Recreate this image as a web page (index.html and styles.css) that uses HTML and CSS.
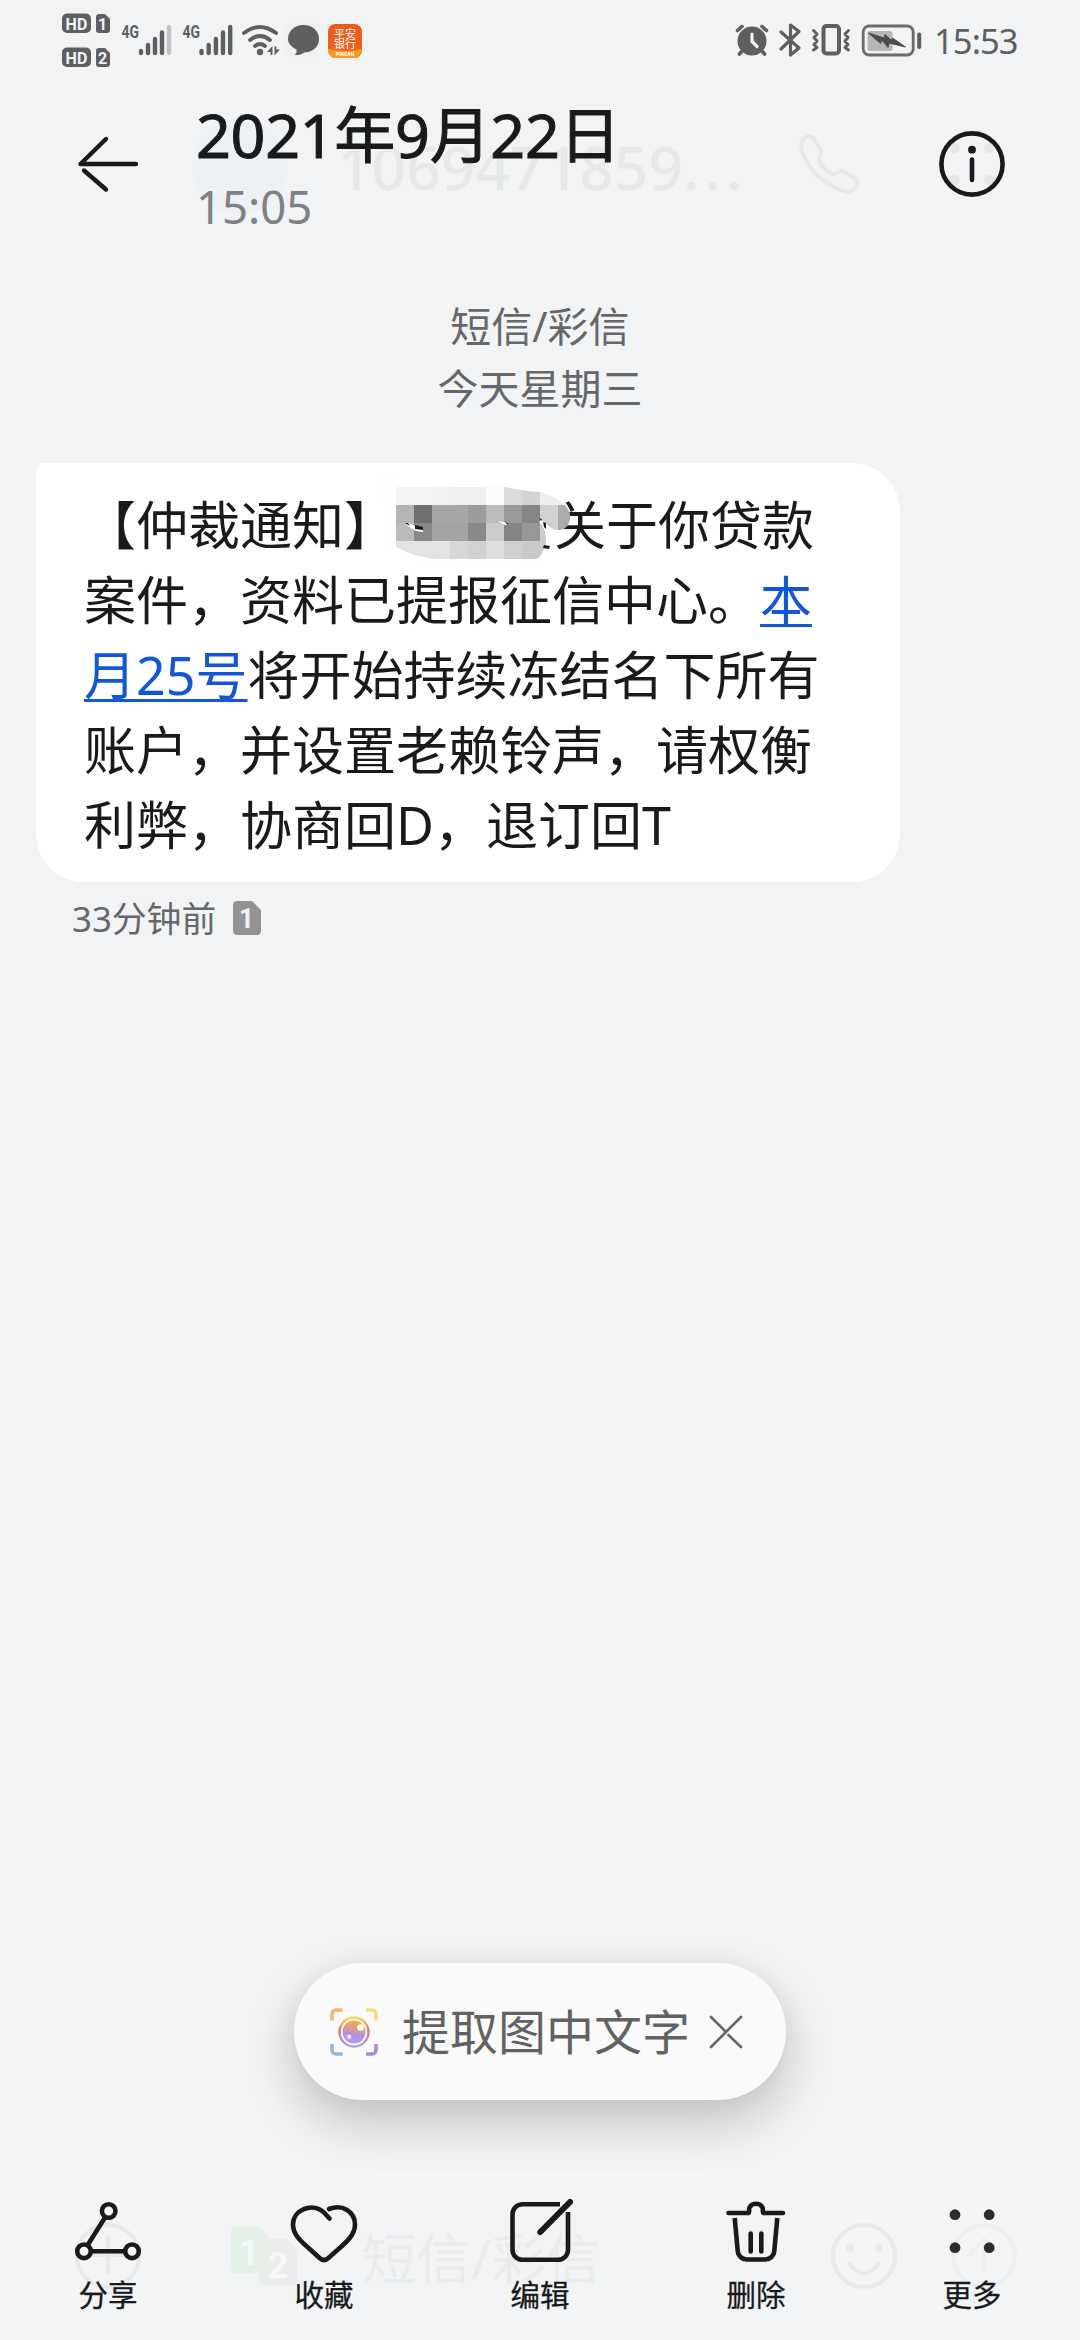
FILE: index.html
```html
<!DOCTYPE html>
<html lang="zh-CN">
<head>
<meta charset="utf-8">
<title>2021年9月22日</title>
<link rel="stylesheet" href="styles.css">
</head>
<body>
<div class="screen">
  <div class="status">
    <svg class="ic" width="48" height="56" viewBox="62 12 48 56">
      <g fill="#5e5f61"><rect x="62" y="13.500" width="29" height="19.500" rx="5"/><path d="M99 14h6l5 5v11a3 3 0 0 1-3 3h-8a3 3 0 0 1-3-3V17a3 3 0 0 1 3-3z"/><rect x="62" y="47.500" width="29" height="19.500" rx="5"/><path d="M99 48h6l5 5v11a3 3 0 0 1-3 3h-8a3 3 0 0 1-3-3V51a3 3 0 0 1 3-3z"/></g>
      <g class="tiny"><text x="76.500" y="29.500" textLength="22">HD</text><text x="76.500" y="63.500" textLength="22">HD</text><text x="102.500" y="29.500">1</text><text x="102.500" y="63.500">2</text></g>
    </svg>
    <svg class="ic sig1" width="51" height="32" viewBox="121 24 51 32">
      <text class="net" x="121.500" y="38" textLength="17.500" lengthAdjust="spacingAndGlyphs">4G</text>
      <path class="bars" d="M141 51v2M148 45v8M155 39v14M162 32.500v20.500"/><path class="bars dim" d="M169 27v26"/>
    </svg>
    <svg class="ic sig2" width="51" height="32" viewBox="182 24 51 32">
      <text class="net" x="182.500" y="38" textLength="17.500" lengthAdjust="spacingAndGlyphs">4G</text>
      <path class="bars" d="M201.500 51v2M208.700 45v8M215.900 39v14M223 32.500v20.500M230.200 27v26"/>
    </svg>
    <svg class="ic wifi" width="40" height="34" viewBox="241 23 40 34">
      <path d="M244 33q16-12 32 0M250 40q10-8 20 0M255 46q5-4 10 0" fill="none" stroke="#5e5f61" stroke-width="3.800" stroke-linecap="round"/>
      <circle cx="260" cy="52" r="3.200" fill="#5e5f61"/><path d="M267 52l5.500-6v9h-2v-3zM280 49.500l-5.500 6v-9h2v3z" fill="#5e5f61"/>
    </svg>
    <svg class="ic chat" width="36" height="36" viewBox="285 23 36 36">
      <rect x="285" y="24" width="34" height="34" rx="8" fill="#f4efef"/>
      <path d="M303.500 26c9 0 15.500 6 15.500 14s-6.500 13.500-15 13.500c-2 2-6 3-9.500 2 2-1 2.500-3 2-5-5-2.500-8.500-6-8.500-10.500 0-8 6.500-14 15.500-14z" fill="#5e5f61"/>
    </svg>
    <svg class="ic bank" width="34" height="34" viewBox="0 0 34 34">
      <defs><linearGradient id="or" x1="0" y1="0" x2="0" y2="1"><stop offset="0" stop-color="#ec5a1c"/><stop offset="1" stop-color="#f4621f"/></linearGradient></defs>
      <rect width="34" height="34" rx="7.500" fill="url(#or)"/><path d="M0 25q17 4 34 0v1.500a7.500 7.500 0 0 1-7.500 7.500h-19A7.500 7.500 0 0 1 0 26.500z" fill="#fb9a20"/>
      <text class="bk" x="17" y="14">平安</text><text class="bk" x="17" y="24">银行</text><text class="pa" x="17" y="31.800">PINGAN</text>
    </svg>
    <div class="right">
      <svg width="34" height="33" viewBox="735 24 34 33">
        <circle cx="752" cy="41" r="14.500" fill="#5e5f61"/><path d="M737.500 30.500l4.500-4M766.500 30.500l-4.500-4M742 51l-2.500 3M762 51l2.500 3" stroke="#5e5f61" stroke-width="3.600" stroke-linecap="round"/><path d="M752 34v7.500l5 5" fill="none" stroke="#f1f2f4" stroke-width="3.200" stroke-linecap="round"/>
      </svg>
      <svg class="bt" width="22" height="36" viewBox="779 22 22 36"><path d="M781 32l18 16-8.500 7V25l8.500 6.500L781 49" fill="none" stroke="#5e5f61" stroke-width="3.200" stroke-linecap="round" stroke-linejoin="round"/></svg>
      <svg class="vib" width="40" height="32" viewBox="811 24 40 32"><rect x="823.500" y="26" width="15.500" height="27.500" rx="3" fill="none" stroke="#5e5f61" stroke-width="4"/><path d="M813.500 30.500l3.500 3.500-3 3.500 3 3.500-3 3.500 3 3-3.500 2.500M848.500 30.500L845 34l3 3.500-3 3.500 3 3.500-3 3 3.500 2.500" fill="none" stroke="#5e5f61" stroke-width="3" stroke-linejoin="round" stroke-linecap="round"/></svg>
      <svg class="bat" width="60" height="33" viewBox="862 24 60 33"><rect x="863.200" y="26" width="50" height="29" rx="6" fill="none" stroke="#6a6b6d" stroke-width="2.800"/><rect x="867.500" y="31" width="25" height="20" rx="2.500" fill="#b5b6b8"/><path d="M868.500 33l15.500 5 1-3.500 6.500 6 1-2.500 13 9-16.500-4-1 4.500-6-7.500-1.500 3.500z" fill="#4c4d4f" stroke="#4c4d4f" stroke-width="1"/><path d="M919.200 34.500v12.500" stroke="#5e5f61" stroke-width="4" stroke-linecap="round"/></svg>
      <span class="clock">15:53</span>
    </div>
  </div>

  <header class="top">
    <div class="ghost" aria-hidden="true">
      <i class="avatar"></i><span class="num">1069471859<b>...</b></span>
      <svg class="phone" width="64" height="64" viewBox="797 132 64 64"><path d="M802.500 140.500c4-5.500 9-5.500 12-.5l6.500 10c2 3.500-3 6-2 10 2 6 8 12.500 13.500 14 4 1 6.500-4.500 10.500-3l11 6.500c5 3 4 7 .5 11-3.500 4-8 4-13 2-19-8-32-20-38.500-36.500-2-5-3-9-.5-13.500z" fill="none" stroke="#e7e8ea" stroke-width="4"/></svg>
    </div>
    <svg class="back" width="62" height="58" viewBox="77 135 62 58"><path d="M136 164H80.500L106 139M84 170.500L106 189.500" fill="none" stroke="#191a1b" stroke-width="4.400" stroke-linecap="round" stroke-linejoin="round"/></svg>
    <div class="titles"><h1>2021年9月22日</h1><p>15:05</p></div>
    <svg class="info" width="66" height="66" viewBox="939 131 66 66"><g fill="#e5e6e8"><circle cx="954.500" cy="148" r="5.300"/><circle cx="989" cy="148" r="5.300"/><circle cx="954.500" cy="180" r="5.300"/><circle cx="989" cy="180" r="5.300"/></g><circle cx="972" cy="164" r="30.600" fill="none" stroke="#191a1b" stroke-width="4.600"/><circle cx="972" cy="149.700" r="3.900" fill="#191a1b"/><path d="M972 159.500v20.500" stroke="#191a1b" stroke-width="4.600" stroke-linecap="round"/></svg>
  </header>

  <main>
    <div class="day">短信/彩信<br>今天星期三</div>
    <div class="bubble">【仲裁通知】<span class="mask"><svg width="200" height="90" viewBox="0 0 200 90">
      <defs><clipPath id="blob"><path d="M0 0h18l90 0 27 4.500 9 0.500c14 4 28 12 30 22 1 12-6 17-14 16-8-2-9-10-17-9 8 10 9 22 4 30-2 4-3 7-7 8H38L18 68 0 60z"/></clipPath></defs>
      <path d="M-16-15c14-2 16 12 30 14l100-3 30 80-40 3-80-5-30-14z" fill="#fefefe"/>
      <g clip-path="url(#blob)" shape-rendering="crispEdges">
        <path fill="#f4f4f4" d="M0 0h36v18H0z"/><path fill="#f1f1f1" d="M36 0h18v18H36z"/><path fill="#efefef" d="M54 0h36v18H54z"/><path fill="#fcfcfc" d="M90 0h18v18H90z"/><path fill="#dcdcdc" d="M108 0h18v18h-18z"/><path fill="#d4d4d4" d="M126 0h18v18h-18z"/><path fill="#eee" d="M144 0h34v18h-34z"/>
        <path fill="#b5b5b5" d="M0 18h18v18H0z"/><path fill="#707070" d="M18 18h18v18H18z"/><path fill="#a6a6a6" d="M36 18h36v18H36z"/><path fill="#9c9c9c" d="M72 18h18v18H72z"/><path fill="#bcbcbc" d="M90 18h18v18H90z"/><path fill="#999" d="M108 18h18v18h-18z"/><path fill="#868686" d="M126 18h18v18h-18z"/><path fill="#d2d2d2" d="M144 18h18v27h-18z"/><path fill="#acacac" d="M162 18h18v27h-18z"/>
        <path fill="#bababa" d="M0 36h18v18H0z"/><path fill="#888" d="M18 36h18v18H18z"/><path fill="#a4a4a4" d="M36 36h36v18H36z"/><path fill="#8a8a8a" d="M72 36h18v18H72z"/><path fill="#ccc" d="M90 36h18v18H90z"/><path fill="#848484" d="M108 36h18v18h-18z"/><path fill="#979797" d="M126 36h18v18h-18z"/><path fill="#ccc" d="M144 36h12v36h-12z"/>
        <path fill="#e3e3e3" d="M0 54h54v18H0z"/><path fill="#d7d7d7" d="M54 54h18v18H54z"/><path fill="#d1d1d1" d="M72 54h18v18H72z"/><path fill="#dedede" d="M90 54h18v18H90z"/><path fill="#d0d0d0" d="M108 54h18v18h-18z"/><path fill="#c9c9c9" d="M126 54h18v18h-18z"/>
      </g>
      <path d="M9 36l4 0 6 3 8 2v4l-7-1-7-4z" fill="#fff"/><path d="M9 36h3l2 3zM19 38l8 2v3l-8-1z" fill="#191a1b"/><path d="M102 34l10 2 3 2-6 0z" fill="#fff"/><path d="M109 35l6 2.500h-4zM147 35l3 1v6l-2-2zM148 58l6 1-1 3-6-1z" fill="#191a1b"/><path d="M143 31l3 1-1 2z" fill="#222"/>
    </svg></span>关于你贷款<br>案件，资料已提报征信中心。<a>本</a><br><a>月25号</a>将开始持续冻结名下所有<br>账户，并设置老赖铃声，请权衡<br>利弊，协商回D，退订回T</div>
    <div class="meta">33分钟前<svg width="28" height="34" viewBox="0 0 28 34"><path d="M4 0h15l9 9v21a4 4 0 0 1-4 4H4a4 4 0 0 1-4-4V4a4 4 0 0 1 4-4z" fill="#929395"/><text x="13.500" y="26.500">1</text></svg></div>
  </main>

  <div class="pill">
    <svg width="48" height="48" viewBox="0 0 48 48">
      <defs><linearGradient id="q" x1="0" y1="0" x2="0" y2="1"><stop offset="0" stop-color="#f4dc5c"/><stop offset=".45" stop-color="#e0706a"/><stop offset="1" stop-color="#9aa6f0"/></linearGradient><linearGradient id="w" x1=".6" y1="0" x2=".4" y2="1"><stop offset="0" stop-color="#efb04e"/><stop offset=".35" stop-color="#e59a80"/><stop offset=".6" stop-color="#b48fe0"/><stop offset="1" stop-color="#b59af8"/></linearGradient></defs>
      <g fill="none" stroke-width="3.600"><path d="M2 12.500V6a4 4 0 0 1 4-4h6.500" stroke="#efb872"/><path d="M36 2h6a4 4 0 0 1 4 4v6.500" stroke="#f1df80"/><path d="M2 36v6a4 4 0 0 0 4 4h6.500" stroke="#8dbbe6"/><path d="M36 46h6a4 4 0 0 0 4-4v-6" stroke="#a48ade"/></g>
      <circle cx="24" cy="24" r="14.500" fill="none" stroke="url(#q)" stroke-width="2.400"/><circle cx="24" cy="24" r="11.500" fill="url(#w)"/><circle cx="30.500" cy="19.500" r="3.300" fill="#fff"/><circle cx="19.200" cy="28.800" r="2" fill="#fff"/>
    </svg>
    <span>提取图中文字</span>
    <svg class="x" width="34" height="34" viewBox="0 0 34 34"><path d="M2 2l15 15L32 2M2 32l15-15M19.500 20L32 32" fill="none" stroke="#666" stroke-width="2.600" stroke-linecap="round"/></svg>
  </div>

  <footer class="bar">
    <svg class="under" aria-hidden="true" width="1080" height="170" viewBox="0 2170 1080 170">
      <path d="M0 2205q8-33 50-33h980q42 0 50 33v135H0z" fill="#f3f4f6"/><rect x="180" y="2203" width="623" height="107" rx="53" fill="#f2f3f5"/>
      <g fill="none" stroke="#e8e9eb" stroke-width="4.200"><circle cx="108" cy="2256" r="31"/><path d="M108 2237v36M92 2255h32" stroke-linecap="round"/><circle cx="864" cy="2256" r="31"/><path d="M849 2264q15 18 30 0" stroke-linecap="round"/></g>
      <g fill="none" stroke="#edeef0" stroke-width="4"><circle cx="984" cy="2256" r="31"/><path d="M984 2272v-33M968 2256l16-16 16 16" stroke-linecap="round"/></g>
      <g fill="#e8e9eb"><circle cx="850" cy="2248" r="3.800"/><circle cx="878.500" cy="2248" r="3.800"/><path d="M262 2239h25l10 10v32a4 4 0 0 1-4 4h-30a4 4 0 0 1-4-4v-38z" fill="#ebecee"/><path d="M314 2251h16l-8 13z" fill="#eceef0"/></g>
      <path d="M235 2226h23l11 11v36h-34a4 4 0 0 1-4-4v-39a4 4 0 0 1 4-4z" fill="#e5f0e9"/>
      <g class="simno"><text x="249" y="2265">1</text><text x="278" y="2278">2</text></g>
      <text class="hint" x="362" y="2279">短信/彩信</text>
    </svg>
    <div class="act"><svg width="68" height="64" viewBox="74 2199 68 64"><g class="ln"><path d="M105 2217.500L88 2244.500M91.500 2251.300h33"/><circle cx="108.700" cy="2211" r="6.800"/><circle cx="84" cy="2251.300" r="6.800"/><circle cx="132" cy="2251.300" r="6.800"/></g></svg>分享</div>
    <div class="act"><svg width="68" height="64" viewBox="290 2199 68 64"><path class="ln" d="M329.500 2218.500l-6-6.500c-12-10-30.500-2-30.500 12.500 0 12 10 18 26.500 33.500q4.500 4 9 0c16.500-15 26.500-21.500 26.500-33.500 0-12.500-12.500-21-26-15.500"/></svg>收藏</div>
    <div class="act"><svg width="68" height="64" viewBox="506 2199 68 64"><path class="ln edge" d="M560 2204.200h-37.500a10 10 0 0 0-10 10v35.500a10 10 0 0 0 10 10h35.500a10 10 0 0 0 10-10V2212"/><path class="ln pen" d="M540.300 2232L570 2202"/></svg>编辑</div>
    <div class="act"><svg width="68" height="64" viewBox="722 2199 68 64"><path class="ln" d="M728.500 2213h20c1.500-.5 0-3 1-5.500 2.500-5 10.500-5 13 0 1 2.500-.5 5 1 5.500h19.500M750.700 2233.500v18M761.300 2233.500v18"/><path class="ln edge" d="M734.700 2218l3 33a9 9 0 0 0 9 8.500h18.600a9 9 0 0 0 9-8.500l3-33"/></svg>删除</div>
    <div class="act"><svg width="68" height="64" viewBox="938 2199 68 64"><g fill="#2b2c2d"><circle cx="955" cy="2214.700" r="5.400"/><circle cx="989.200" cy="2214.700" r="5.400"/><circle cx="955" cy="2247.700" r="5.400"/><circle cx="989.200" cy="2247.700" r="5.400"/></g></svg>更多</div>
  </footer>
</div>
</body>
</html>
```
FILE: styles.css
```css
* { box-sizing: border-box; margin: 0; padding: 0; }
body {
  width: 1080px;
  background: #f1f3f5;
  color: #191a1b;
  font-family: "Noto Sans", "Noto Sans CJK SC", sans-serif;
  text-spacing-trim: space-all;
}
svg { display: block; flex: none; overflow: visible; }
.screen { width: 1080px; height: 2340px; display: flex; flex-direction: column; overflow: hidden; }

.status { display: flex; align-items: center; height: 80px; padding: 0 62px; }
.sig1 { margin-left: 11px; }
.sig2 { margin-left: 10px; }
.wifi { margin-left: 8px; }
.chat { margin-left: 4px; }
.bank { margin-left: 7px; margin-top: 2px; }
.right { display: flex; align-items: center; margin-left: 373px; }
.bt { margin-left: 10px; }
.vib { margin-left: 10px; }
.bat { margin-left: 11px; }
.clock { margin-left: 12px; font-size: 34.5px; letter-spacing: -.9px; line-height: 80px; color: #5e5f61; margin-top: 2px; white-space: nowrap; }
.tiny { font: 700 16px Roboto, sans-serif; fill: #f1f3f5; text-anchor: middle; }
.net { font: 700 18px Roboto, sans-serif; fill: #5e5f61; }
.bars { fill: none; stroke: #5e5f61; stroke-width: 4.4; stroke-linecap: round; }
.bars.dim { stroke: #c0c1c3; }
.bk { font: 400 11px "Noto Sans CJK SC", sans-serif; fill: #fff; text-anchor: middle; }
.pa { font: 700 5px Roboto, sans-serif; fill: #fff; text-anchor: middle; }

.top { position: relative; display: flex; height: 168px; padding-left: 77px; align-items: flex-start; }
.back { margin-top: 55px; }
.titles { position: relative; margin-left: 57px; width: 743px; }
h1 { font-size: 61px; line-height: 80px; margin-top: 15px; font-weight: 400; letter-spacing: -.3px; white-space: nowrap; -webkit-text-stroke: 1px #191a1b; }
.titles p { font-size: 45.5px; line-height: 60px; color: #808183; margin-top: 1px; }
.info { position: relative; margin-top: 51px; }
.ghost { position: absolute; inset: 0; }
.avatar { position: absolute; left: 192px; top: 39px; width: 96px; height: 96px; border-radius: 50%; background: #edf1f5; }
.num { position: absolute; left: 337px; top: 47px; font-size: 60.5px; line-height: 80px; font-weight: 500; color: #e7e8ea; }
.num b { font-weight: 500; letter-spacing: 5px; }
.phone { position: absolute; left: 797px; top: 52px; }

main { display: flex; flex-direction: column; align-items: flex-start; }
.day { align-self: center; margin-top: 47px; font-size: 41px; line-height: 62px; color: #666769; text-align: center; }
.bubble {
  width: 864px;
  height: 419px;
  margin: 44px 0 0 36px;
  padding: 24px 40px 0 48px;
  border-radius: 8px 48px 48px 48px;
  background: #fff;
  font-size: 52px;
  line-height: 75px;
  white-space: nowrap;
}
.bubble a { color: #1257d6; text-decoration: underline; text-decoration-thickness: 3px; text-underline-offset: 4px; text-decoration-skip-ink: none; }
.mask { display: inline-block; position: relative; width: 158px; height: 40px; }
.mask svg { position: absolute; left: 0; top: -18px; }
.meta { display: flex; align-items: center; gap: 17px; margin: 12px 0 0 72px; height: 50px; font-size: 34.8px; line-height: 50px; color: #666769; }
.meta svg { margin-top: -2px; }
.meta text { font: 700 27px Roboto, sans-serif; fill: #f1f3f5; text-anchor: middle; }

.pill {
  display: flex;
  align-items: center;
  width: 492px;
  height: 137px;
  margin: auto auto 72px 294px;
  padding-left: 36px;
  border-radius: 69px;
  background: #fafafa;
  box-shadow: 0 22px 50px rgba(0, 0, 0, .2), 0 0 24px rgba(0, 0, 0, .04);
  color: #626262;
  font-size: 48px;
  line-height: 70px;
  white-space: nowrap;
}
.pill span { margin-left: 24px; }
.pill .x { margin-left: 19px; }

.bar { position: relative; display: flex; height: 168px; flex: none; }
.under { position: absolute; left: 0; top: -2px; }
.simno { font: 700 36px Roboto, sans-serif; fill: #f6f8f8; text-anchor: middle; }
.hint { font-size: 54.5px; fill: #e9ebed; }
.act { position: relative; flex: 1; display: flex; flex-direction: column; align-items: center; padding-top: 27px; font-size: 29.5px; line-height: 40px; -webkit-text-stroke: .3px #191a1b; }
.act svg { margin-bottom: 12px; }
.ln { fill: none; stroke: #191a1b; stroke-width: 4.6; stroke-linecap: round; stroke-linejoin: round; }
.edge { stroke-linecap: butt; }
.pen { stroke-width: 6; }
```
